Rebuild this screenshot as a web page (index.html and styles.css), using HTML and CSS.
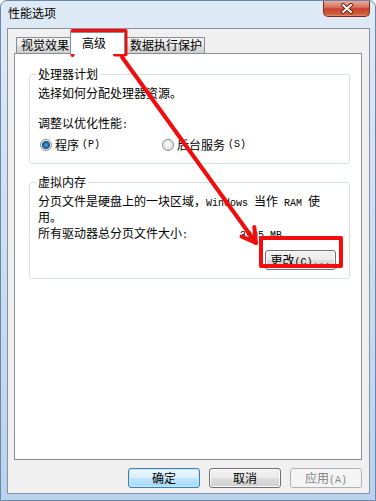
FILE: index.html
```html
<!DOCTYPE html>
<html lang="zh-CN">
<head>
  <meta charset="UTF-8">
  <title>性能选项</title>
  <link rel="stylesheet" href="styles.css">
</head>
<body>
  <div class="window">
    <div class="titlebar">
      <span class="title">性能选项</span>
      <button class="close" aria-label="关闭">
        <svg width="14" height="11" viewBox="0 0 14 11">
          <path d="M3 2 L11 9 M11 2 L3 9" stroke="#6b2418" stroke-width="4" stroke-linecap="round"/>
          <path d="M3 2 L11 9 M11 2 L3 9" stroke="#fff" stroke-width="2" stroke-linecap="round"/>
        </svg>
      </button>
    </div>

    <div class="client">
      <div class="tabs">
        <div class="tab tab-visual">视觉效果</div>
        <div class="tab active">高级</div>
        <div class="tab tab-dep">数据执行保护</div>
      </div>

      <div class="page">
        <fieldset class="group">
          <legend>处理器计划</legend>
          <p>选择如何分配处理器资源。</p>
          <p class="adjust">调整以优化性能<span class="en">:</span></p>
          <div class="radios">
            <label class="radio-item first"><span class="radio checked"></span>程序<span class="en">(P)</span></label>
            <label class="radio-item"><span class="radio"></span>后台服务<span class="en">(S)</span></label>
          </div>
        </fieldset>

        <fieldset class="group vm">
          <legend>虚拟内存</legend>
          <p class="desc">分页文件是硬盘上的一块区域，<span class="en">Windows </span>当作<span class="en"> RAM </span>使用。</p>
          <p class="total"><span class="total-label">所有驱动器总分页文件大小<span class="en">:</span></span><span class="en">3995 MB</span></p>
          <div class="btn-row">
            <button class="btn">更改<span class="en">(C)...</span></button>
          </div>
        </fieldset>
      </div>

      <div class="actions">
        <button class="btn default">确定</button>
        <button class="btn">取消</button>
        <button class="btn" disabled>应用<span class="en">(A)</span></button>
      </div>
    </div>

    <!-- red annotation drawn over the dialog -->
    <svg class="annot" width="376" height="501" viewBox="0 0 376 501">
      <g fill="none" stroke="#f20c0c" stroke-width="4" stroke-linecap="round" stroke-linejoin="round">
        <path d="M72.5 55 V31 H125.5 V54.5 H115"/>
        <rect x="261" y="238" width="80" height="28"/>
        <path d="M122 57 L256 243"/>
        <path d="M241.5 236.5 L256 243 L254.3 227"/>
      </g>
    </svg>
  </div>
</body>
</html>
```

FILE: styles.css
```css
* {
  box-sizing: border-box;
}

body {
  margin: 0;
  font-family: "Noto Sans CJK SC", sans-serif;
  font-size: 12px;
  line-height: 14px;
  color: #000;
}

p {
  margin: 0;
}

.en {
  font-family: "Liberation Mono", monospace;
  font-size: 10px;
  line-height: 12px;
}

.window {
  position: relative;
  width: 376px;
  height: 501px;
  padding: 0 5px 6px 6px;
  border: 1px solid #6a86a8;
  border-radius: 7px 7px 0 0;
  background: linear-gradient(#dfeaf6, #cfe0f3 40%, #bad2ee);
  overflow: hidden;
}

.titlebar {
  height: 27px;
  display: flex;
  justify-content: space-between;
  align-items: flex-start;
}

.title {
  padding: 5px 0 0 1px;
}

.close {
  width: 47px;
  height: 17px;
  margin-top: -1px;
  padding: 0;
  border: 1px solid #7a2d22;
  border-top: 0;
  border-radius: 0 0 5px 5px;
  background: linear-gradient(#eab3a5, #d9735f 45%, #c6442c 55%, #d0603f 90%, #e6957a);
  display: flex;
  align-items: center;
  justify-content: center;
}

.client {
  height: 466px;
  border: 1px solid #8592a2;
  background: #f0f0f0;
  padding: 0 6px;
}

.tabs {
  height: 24px;
  display: flex;
  align-items: flex-end;
  padding-left: 2px;
}

.tab {
  height: 16px;
  border: 1px solid #898c95;
  border-bottom: 0;
  background: linear-gradient(#f2f2f2, #ebebeb 50%, #dddddd 50%, #cfcfcf);
  padding-left: 4px;
}

.tab-visual {
  width: 55px;
}

.tab.active {
  position: relative;
  z-index: 1;
  width: 55px;
  height: 22px;
  margin: 0 0 -1px -1px;
  padding: 3px 0 0 11px;
  background: #fff;
}

.tab-dep {
  width: 81px;
  margin-left: -1px;
  padding-left: 5px;
}

.page {
  width: 348px;
  height: 407px;
  border: 1px solid #898c95;
  background: #fff;
  padding: 0 0 0 14px;
}

.group {
  width: 321px;
  margin: 13px 0 0;
  padding: 5px 8px 11px;
  border: 1px solid #d5dfe5;
  border-radius: 3px;
}

.group legend {
  padding: 0 2px;
  margin-left: -2px;
  line-height: 14px;
}

.adjust {
  margin-top: 16px;
}

.radios {
  display: flex;
  margin-top: 6px;
}

.radio-item {
  display: flex;
  align-items: center;
  gap: 3px;
}

.radio-item.first {
  width: 122px;
}

.radio {
  width: 12px;
  height: 12px;
  margin-left: 2px;
  border: 1px solid #8f8f8f;
  border-radius: 50%;
  background: radial-gradient(circle at 50% 45%, #ffffff, #e2e2e2 70%, #cfcfcf);
}

.radio.checked {
  background: radial-gradient(circle, #5fb0ea 0, #1f67a8 2.5px, #174f86 3.5px, #f0f0f0 4.5px, #d6d6d6);
}

.group.vm {
  margin-top: 11px;
  padding-bottom: 8px;
}

.desc {
  width: 290px;
  line-height: 14px;
}

.total {
  margin-top: 2px;
}

.total-label {
  display: inline-block;
  width: 202px;
}

.btn-row {
  display: flex;
  justify-content: flex-end;
  margin: 8px 5px 0 0;
}

.btn {
  width: 71px;
  height: 20px;
  padding: 0;
  border: 1px solid #707070;
  border-radius: 3px;
  background: linear-gradient(#f2f2f2, #ebebeb 50%, #dddddd 50%, #cfcfcf);
  box-shadow: inset 0 0 0 1px #fbfbfb;
  font-family: inherit;
  font-size: 12px;
  line-height: 16px;
  color: #000;
  text-align: center;
  white-space: nowrap;
}

.actions {
  display: flex;
  justify-content: flex-end;
  gap: 9px;
  margin-top: 8px;
  padding-right: 1px;
}

.actions .btn {
  width: 72px;
}

.btn.default {
  border-color: #3c7fb1;
  background: linear-gradient(#eaf6fd, #d9f0fc 50%, #bee6fd 50%, #a7d9f5);
  box-shadow: inset 0 0 0 1px #c5e6f8;
}

.btn:disabled {
  border-color: #adb2b5;
  background: #f4f4f4;
  box-shadow: none;
  color: #838383;
}

.annot {
  position: absolute;
  top: -1px;
  left: -1px;
  pointer-events: none;
}
```
